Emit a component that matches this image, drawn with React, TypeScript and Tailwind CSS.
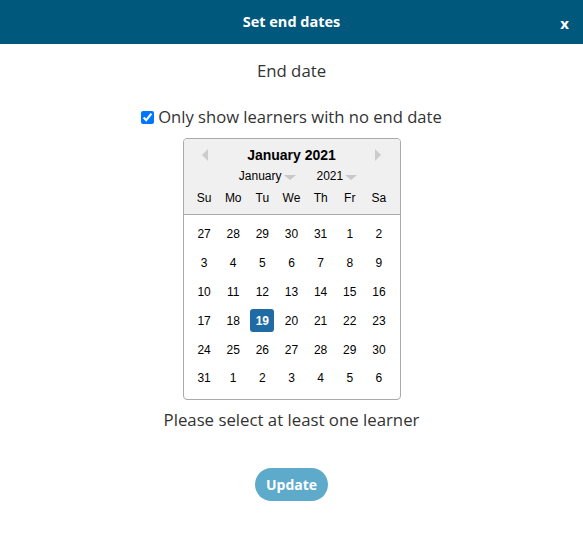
import { useState } from 'react';

const WEEKDAYS = ['Su', 'Mo', 'Tu', 'We', 'Th', 'Fr', 'Sa'];

// 6 weeks shown, starting from Sunday Dec 27 2020
const DAYS = [
  27, 28, 29, 30, 31, 1, 2,
  3, 4, 5, 6, 7, 8, 9,
  10, 11, 12, 13, 14, 15, 16,
  17, 18, 19, 20, 21, 22, 23,
  24, 25, 26, 27, 28, 29, 30,
  31, 1, 2, 3, 4, 5, 6,
];

function Caret() {
  return (
    <span className="inline-block w-0 h-0 border-l-[6px] border-r-[6px] border-t-[5px] border-l-transparent border-r-transparent border-t-[#c8c8c8] ml-[2px] mt-[3px]" />
  );
}

function Calendar() {
  const [selected, setSelected] = useState(23); // index of the 19th

  return (
    <div
      className="w-[218px] border border-[#aaaaaa] rounded-[4px] bg-white overflow-hidden"
      style={{ fontFamily: '"Liberation Sans", Arial, sans-serif' }}
    >
      <div className="bg-[#f0f0f0] border-b border-[#aaaaaa] px-[6px] pt-[6px] h-[76px]">
        <div className="flex items-center justify-between px-[12px] h-[20px]">
          <span className="w-0 h-0 border-t-[6px] border-b-[6px] border-r-[6px] border-t-transparent border-b-transparent border-r-[#cccccc]" />
          <span className="text-[14px] font-bold text-black">January 2021</span>
          <span className="w-0 h-0 border-t-[6px] border-b-[6px] border-l-[6px] border-t-transparent border-b-transparent border-l-[#cccccc]" />
        </div>
        <div className="flex items-center justify-center gap-[21px] pl-[13px] pt-[1px] text-[12px] text-black h-[20px]">
          <span className="flex items-center">
            January
            <Caret />
          </span>
          <span className="flex items-center">
            2021
            <Caret />
          </span>
        </div>
        <div className="grid grid-cols-7 text-[12px] text-black text-center mt-[3px] h-[20px] items-center">
          {WEEKDAYS.map((d) => (
            <span key={d}>{d}</span>
          ))}
        </div>
      </div>

      <div className="grid grid-cols-7 px-[6px] pt-[5px] pb-[6px] text-[12px] text-black text-center">
        {DAYS.map((d, i) => (
          <div key={i} className="h-[28.8px] flex items-center justify-center">
            <button
              onClick={() => setSelected(i)}
              className={
                i === selected
                  ? 'w-[24px] h-[23px] rounded-[3px] bg-[#1f6ca4] text-white font-bold'
                  : 'w-[24px] h-[23px]'
              }
            >
              {d}
            </button>
          </div>
        ))}
      </div>
    </div>
  );
}

export default function App() {
  const [noEndDate, setNoEndDate] = useState(true);

  return (
    <div
      className="w-[583px] h-[547px] bg-white text-[#333333] flex flex-col"
      style={{ fontFamily: '"Open Sans", "Noto Sans", sans-serif' }}
    >
      {/* Header */}
      <div className="relative h-[44px] bg-[#00587c] flex items-center justify-center text-white shrink-0">
        <h2 className="text-[14.5px] font-bold">Set end dates</h2>
        <button className="absolute right-[14px] top-[12px] text-[15px] font-bold">x</button>
      </div>

      <div className="flex flex-col items-center">
        <p className="mt-[15px] text-[16.8px] leading-[24px]">End date</p>

        <label className="mt-[22px] flex items-center gap-[4px] text-[16.6px] leading-[24px]">
          <input
            type="checkbox"
            checked={noEndDate}
            onChange={(e) => setNoEndDate(e.target.checked)}
            className="w-[13px] h-[13px] accent-[#0075ff]"
          />
          Only show learners with no end date
        </label>

        <div className="mt-[9px]">
          <Calendar />
        </div>

        <p className="mt-[8px] text-[16.8px] leading-[24px]">Please select at least one learner</p>

        <button className="mt-[36px] h-[33px] px-[11px] rounded-full bg-[#5eaacb] text-white text-[14px] font-bold">
          Update
        </button>
      </div>
    </div>
  );
}
